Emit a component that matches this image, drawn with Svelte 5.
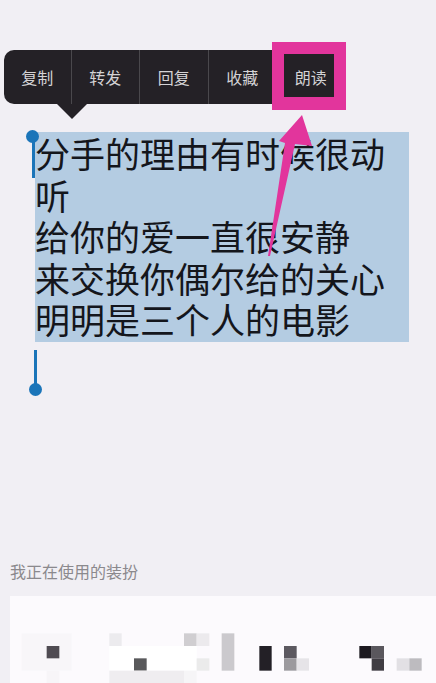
<script>
	const actions = ['复制', '转发', '回复', '收藏', '朗读'];
	const lyrics = [
		'分手的理由有时候很动听',
		'给你的爱一直很安静',
		'来交换你偶尔给的关心',
		'明明是三个人的电影'
	];
	// censored thumbnails, [x, y, w, h, colour]
	const mosaic = [
		[65, 250, 150, 112, '#f8f6f9'],
		[140, 288, 38, 37, '#4f4b52'],
		[140, 362, 38, 37, '#f7f5f8'],
		[328, 250, 37, 38, '#ecebee'],
		[552, 250, 38, 38, '#d0ced1'],
		[590, 250, 38, 38, '#eceaed'],
		[328, 288, 262, 74, '#ffffff'],
		[402, 325, 38, 37, '#59595b'],
		[590, 325, 38, 37, '#ebebeb'],
		[328, 362, 224, 37, '#efedf0'],
		[552, 362, 38, 37, '#f6f5f7'],
		[665, 250, 38, 112, '#cbc9cd'],
		[778, 288, 37, 74, '#232026'],
		[852, 288, 38, 37, '#5c5960'],
		[852, 325, 38, 37, '#9c9a9e'],
		[890, 325, 37, 37, '#e6e4e8'],
		[1078, 288, 37, 37, '#1d1a20'],
		[1115, 288, 37, 37, '#5a575d'],
		[1115, 325, 37, 37, '#403d43'],
		[1190, 325, 38, 37, '#e2e0e4'],
		[1228, 325, 37, 37, '#bdbbbf']
	];
</script>

<div class="page">
	<div class="menu">
		{#each actions as action}
			<div class="action">{action}</div>
		{/each}
		<div class="pointer"></div>
		<div class="highlight"></div>
	</div>

	<div class="selection">
		{#each lyrics as line}
			<p>{line}</p>
		{/each}
		<span class="handle top"></span>
		<span class="handle bottom"></span>
	</div>

	<div class="label">我正在使用的装扮</div>
	<div class="card">
		<svg width="426" height="87" viewBox="30 138 1278 261">
			{#each mosaic as [x, y, w, h, fill]}
				<rect {x} {y} width={w} height={h} {fill} />
			{/each}
		</svg>
	</div>

	<svg class="arrow" width="436" height="683" viewBox="0 0 436 683">
		<polygon points="302,115 279,141 285,143 268,256 270,256 295,144 312,146" />
	</svg>
</div>

<style>
	:global(body) {
		background: #f1eff4;
	}
	.page {
		position: relative;
		height: 683px;
		overflow: hidden;
		padding-top: 50px;
		box-sizing: border-box;
		background: #f1eff4;
		font-family: 'Noto Sans CJK SC', 'Noto Sans', sans-serif;
	}
	.menu {
		position: relative;
		display: flex;
		width: 338px;
		height: 54px;
		margin-left: 4px;
		background: #242126;
		border-radius: 10px 0 0 10px;
	}
	.action {
		flex: none;
		width: 68.5px;
		box-sizing: border-box;
		border-right: 1px solid #4a484c;
		color: #d4d3d5;
		font-size: 16px;
		line-height: 54px;
		text-align: center;
	}
	.action:first-child {
		width: 67.5px;
	}
	.pointer {
		position: absolute;
		left: 53px;
		top: 54px;
		border-left: 15px solid transparent;
		border-right: 15px solid transparent;
		border-top: 15px solid #242126;
	}
	.highlight {
		position: absolute;
		left: 268px;
		top: -8px;
		width: 50px;
		height: 43px;
		border: 12px solid #e2359c;
		border-bottom-width: 13px;
	}
	.selection {
		position: relative;
		width: 374px;
		height: 210px;
		box-sizing: border-box;
		padding-top: 3px;
		margin: 28px 0 0 35px;
		background: #b4cce2;
		color: #14161c;
		font-family: 'Liberation Sans', 'Noto Sans CJK SC', sans-serif;
		font-size: 35px;
		line-height: 41.5px;
	}
	p {
		margin: 0;
	}
	.handle {
		position: absolute;
		width: 3px;
		background: #1b75b9;
	}
	.handle::after {
		content: '';
		position: absolute;
		width: 13px;
		height: 13px;
		left: -5px;
		border-radius: 50%;
		background: #1b75b9;
	}
	.handle.top {
		left: -3px;
		top: 8px;
		height: 38px;
	}
	.handle.top::after {
		top: -10px;
		left: -6px;
	}
	.handle.bottom {
		left: -1px;
		top: 218px;
		height: 40px;
	}
	.handle.bottom::after {
		bottom: -6px;
	}
	.label {
		margin: 217px 0 0 10px;
		color: #8b898d;
		font-size: 16px;
		line-height: 24px;
	}
	.card {
		height: 87px;
		margin: 13px 0 0 10px;
		background: #fcfafd;
	}
	.card svg {
		display: block;
	}
	.arrow {
		position: absolute;
		left: 0;
		top: 0;
		pointer-events: none;
	}
	.arrow polygon {
		fill: #e2359c;
	}
</style>
